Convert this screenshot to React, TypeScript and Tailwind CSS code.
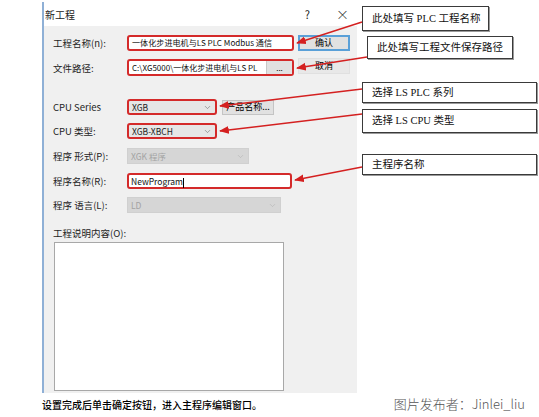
import { ChevronDown } from "lucide-react";

const red = "border-2 border-[#d42a2a] rounded-[3px]";

const Label = ({ text }: { text: string }) => (
  <div className="w-[74px] shrink-0 text-[9.5px] leading-[16px] text-[#1e1e1e]">{text}</div>
);

const Select = ({ value, width, disabled, hl }: { value: string; width: string; disabled?: boolean; hl?: boolean }) => (
  <div
    className={`${width} h-[16px] flex items-center justify-between pl-[3px] pr-[3px] text-[8.5px] ${
      disabled ? "bg-[#d6d6d6] text-[#a3a3a3] border border-[#d0d0d0]" : "bg-[#e6e6e6] text-[#222]"
    } ${hl ? red : ""}`}
  >
    <span>{value}</span>
    <ChevronDown size={9} strokeWidth={1.6} className={disabled ? "text-[#b3b3b3]" : "text-[#6f6f6f]"} />
  </div>
);

const Dialog = () => (
  <div className="w-[315px] h-[391px] mt-[2px] flex flex-col border-l-2 border-[#8fb0d6]">
    <div className="h-[24px] bg-white flex items-center pl-[1px] text-[10px] text-[#222]">
      <span>新工程</span>
      <span className="ml-auto mr-[26px] text-[11px]">?</span>
      <span className="mr-[8px] text-[13px] font-light">×</span>
    </div>
    <div className="flex-1 bg-[#f0f0f0] pl-[9px] pt-[9px]">
      <div className="flex items-center h-[16px]">
        <Label text="工程名称(n):" />
        <div className={`w-[167px] h-[16px] bg-white pl-[3px] text-[8.1px] leading-[12px] text-[#111] whitespace-nowrap ${red}`}>
          一体化步进电机与LS PLC Modbus 通信
        </div>
        <div className="ml-[4px] w-[52px] h-[16px] bg-[#e1e1e1] border-2 border-[#5aa0d8] text-[9px] flex items-center justify-center">
          确认
        </div>
      </div>
      <div className="flex items-center h-[17px] mt-[8px]">
        <Label text="文件路径:" />
        <div className={`w-[167px] h-[17px] bg-white flex items-center ${red}`}>
          <span className="pl-[3px] flex-1 text-[8px] whitespace-nowrap text-[#111]">
            C:\XG5000\一体化步进电机与LS PL
          </span>
          <span className="w-[26px] h-full bg-[#e1e1e1] border-l border-[#c8c8c8] text-[8px] flex items-center justify-center">
            ...
          </span>
        </div>
        <div className="ml-[4px] -mt-[3px] w-[52px] h-[16px] bg-[#e8e8e8] border border-[#e0e0e0] text-[9px] flex items-center justify-center">
          取消
        </div>
      </div>
      <div className="flex items-center h-[16px] mt-[23px]">
        <Label text="CPU Series" />
        <Select value="XGB" width="w-[90px]" hl />
        <div className="ml-[5px] w-[52px] h-[15px] bg-[#e1e1e1] border border-[#c4c4c4] text-[9px] flex items-center justify-center">
          产品名称...
        </div>
      </div>
      <div className="flex items-center h-[16px] mt-[8px]">
        <Label text="CPU 类型:" />
        <Select value="XGB-XBCH" width="w-[90px]" hl />
      </div>
      <div className="flex items-center h-[16px] mt-[9px]">
        <Label text="程序 形式(P):" />
        <Select value="XGK 程序" width="w-[122px]" disabled />
      </div>
      <div className="flex items-center h-[16px] mt-[9px]">
        <Label text="程序名称(R):" />
        <div className={`w-[165px] h-[16px] bg-white pl-[2px] text-[8.5px] leading-[12px] text-[#111] ${red}`}>
          NewProgram<span className="inline-block w-[1px] h-[10px] bg-black align-middle" />
        </div>
      </div>
      <div className="flex items-center h-[16px] mt-[8px]">
        <Label text="程序 语言(L):" />
        <Select value="LD" width="w-[154px]" disabled />
      </div>
      <div className="mt-[14px] h-[12px] text-[9.5px] leading-[12px] text-[#1e1e1e]">工程说明内容(O):</div>
      <div className="ml-[1px] mt-[3px] w-[230px] h-[149px] bg-white border border-[#a8a8a8]" />
    </div>
  </div>
);

const Note = ({ text, cls }: { text: string; cls: string }) => (
  <div
    className={`${cls} flex items-center pl-[9px] bg-white border border-[#3a3a3a] shadow-[1px_1px_0_#9a9a9a] text-[10.5px] text-[#111] font-['Liberation_Serif','Noto_Sans_CJK_SC',serif]`}
  >
    {text}
  </div>
);

const Arrows = () => {
  const lines = [
    [362, 22, 297, 43],
    [367, 57, 297, 68],
    [362, 89, 220, 106],
    [362, 114, 220, 131],
    [362, 167, 295, 180],
  ];
  return (
    <svg className="absolute inset-0 pointer-events-none" width={539} height={417}>
      <defs>
        <marker id="ah" viewBox="0 0 10 10" refX="9" refY="5" markerWidth="7" markerHeight="7" orient="auto">
          <path d="M0 1 L10 5 L0 9 z" fill="#d42020" />
        </marker>
      </defs>
      {lines.map(([x1, y1, x2, y2], i) => (
        <line key={i} x1={x1} y1={y1} x2={x2} y2={y2} stroke="#d42020" strokeWidth={1.4} markerEnd="url(#ah)" />
      ))}
    </svg>
  );
};

export default function App() {
  return (
    <div className="relative w-[539px] h-[417px] bg-white overflow-hidden font-['Noto_Sans_CJK_SC',sans-serif]">
      <div className="flex">
        <div className="w-[42px] shrink-0" />
        <Dialog />
        <div className="ml-[5px] flex flex-col">
          <Note text="此处填写 PLC 工程名称" cls="mt-[6px] w-[127px] h-[25px]" />
          <Note text="此处填写工程文件保存路径" cls="mt-[5px] ml-[5px] w-[146px] h-[23px]" />
          <Note text="选择 LS PLC  系列" cls="mt-[23px] w-[175px] h-[21px]" />
          <Note text="选择 LS CPU  类型" cls="mt-[6px] w-[175px] h-[24px]" />
          <Note text="主程序名称" cls="mt-[21px] w-[175px] h-[21px]" />
        </div>
      </div>
      <div className="flex items-center h-[22px] pl-[42px] pr-[14px]">
        <span className="text-[10px] font-medium text-black">设置完成后单击确定按钮，进入主程序编辑窗口。</span>
        <span className="ml-auto text-[13px] font-light text-[#555]">图片发布者：Jinlei_liu</span>
      </div>
      <Arrows />
    </div>
  );
}
